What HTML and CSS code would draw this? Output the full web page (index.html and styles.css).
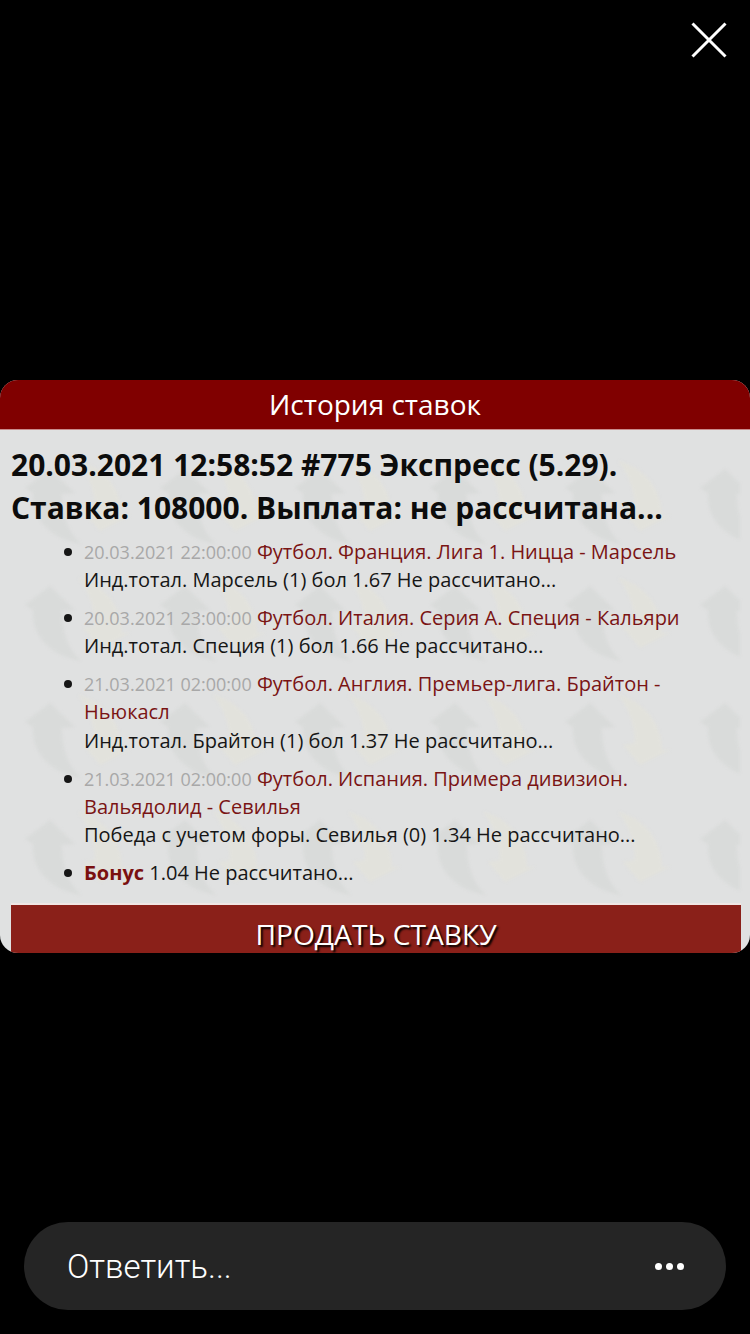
FILE: index.html
```html
<!DOCTYPE html>
<html lang="en">
<head>
    <meta charset="UTF-8">
    <meta name="viewport" content="width=device-width, initial-scale=1.0">
    <title>История ставок</title>
    <link rel="stylesheet" href="styles.css">
</head>
<body>
    <div class="top-bar">
        <svg class="close-icon" width="36" height="36" viewBox="0 0 36 36">
            <path d="M1.5 1.5L34.5 34.5M34.5 1.5L1.5 34.5" stroke="#fff" stroke-width="3" fill="none"/>
        </svg>
    </div>

    <div class="card">
        <div class="card-header">История ставок</div>
        <div class="card-body">
            <!-- Watermark behind the bet list -->
            <svg class="watermark" width="740" height="474">
                <defs>
                    <pattern id="arrows" x="25" y="31" width="135" height="117" patternUnits="userSpaceOnUse">
                        <path d="M25 8L0 27L8 32C6 56 24 78 56 83C42 70 37 52 37 33L50 32Z" fill="#d9dbda"/>
                        <path d="M53 0C78 6 96 26 97 55L105 55L75 70L58 50L70 48C70 28 62 10 53 0Z" fill="#e2e2dc"/>
                    </pattern>
                </defs>
                <rect width="100%" height="100%" fill="url(#arrows)"/>
            </svg>

            <h2 class="bet-title">20.03.2021 12:58:52 #775 Экспресс (5.29). Ставка: 108000. Выплата: не рассчитана...</h2>

            <ul class="bet-list">
                <li>
                    <span class="bet-date">20.03.2021 22:00:00</span>
                    <a class="bet-event">Футбол. Франция. Лига 1. Ницца - Марсель</a><br>
                    Инд.тотал. Марсель (1) бол 1.67 Не рассчитано...
                </li>
                <li>
                    <span class="bet-date">20.03.2021 23:00:00</span>
                    <a class="bet-event">Футбол. Италия. Серия А. Специя - Кальяри</a><br>
                    Инд.тотал. Специя (1) бол 1.66 Не рассчитано...
                </li>
                <li>
                    <span class="bet-date">21.03.2021 02:00:00</span>
                    <a class="bet-event">Футбол. Англия. Премьер-лига. Брайтон - Ньюкасл</a><br>
                    Инд.тотал. Брайтон (1) бол 1.37 Не рассчитано...
                </li>
                <li>
                    <span class="bet-date">21.03.2021 02:00:00</span>
                    <a class="bet-event">Футбол. Испания. Примера дивизион. Вальядолид - Севилья</a><br>
                    Победа с учетом форы. Севилья (0) 1.34 Не рассчитано...
                </li>
                <li>
                    <strong class="bet-bonus">Бонус</strong> 1.04 Не рассчитано...
                </li>
            </ul>

            <button class="sell-button">ПРОДАТЬ СТАВКУ</button>
        </div>
    </div>

    <div class="reply-area">
        <div class="reply-bar">
            <span class="reply-text">Ответить...</span>
            <span class="reply-dots"><i></i><i></i><i></i></span>
        </div>
    </div>
</body>
</html>
```

FILE: styles.css
```css
/* Global */
* {
    box-sizing: border-box;
}
body {
    margin: 0;
    width: 750px;
    height: 1334px;
    background-color: #000;
    display: flex;
    flex-direction: column;
    font-family: "Open Sans", sans-serif;
    overflow: hidden;
}

/* Close icon */
.top-bar {
    height: 380px;
    display: flex;
    justify-content: flex-end;
    align-items: flex-start;
    padding: 22px 23px 0 0;
}

/* Card */
.card {
    height: 573px;
    border-radius: 18px;
    overflow: hidden;
    background-color: #e0e1e1;
    display: flex;
    flex-direction: column;
}
.card-header {
    height: 50px;
    flex-shrink: 0;
    background-color: #800000;
    border-bottom: 1px solid #c98c8c;
    color: #fff;
    font-size: 28px;
    line-height: 48px;
    text-align: center;
}
.card-body {
    position: relative;
    flex: 1;
    padding: 13px 9px 0 11px;
}
.watermark {
    position: absolute;
    top: 0;
    left: 0;
    filter: blur(1.5px);
}

/* Bet details */
.bet-title {
    position: relative;
    margin: 0;
    font-size: 30px;
    line-height: 43px;
    font-weight: 700;
    color: #0c0c0c;
}
.bet-list {
    position: relative;
    margin: 8.6px 0 0;
    padding: 0 0 0 73px;
    font-size: 20px;
    line-height: 28.4px;
    color: #161616;
    list-style: none;
}
.bet-list li {
    position: relative;
    margin-bottom: 9.4px;
}
.bet-list li::before {
    content: "";
    position: absolute;
    left: -20px;
    top: 10px;
    width: 8px;
    height: 8px;
    border-radius: 50%;
    background-color: #161616;
}
.bet-date {
    color: #a8a8a8;
    font-size: 18px;
}
.bet-event {
    color: #7a1414;
}
.bet-bonus {
    color: #7a1010;
}

/* Sell button */
.sell-button {
    position: relative;
    display: block;
    width: 100%;
    height: 60px;
    margin-top: 15.4px;
    padding: 0;
    background-color: #8a2019;
    border: none;
    border-top: 2px solid #f0e6e4;
    color: #fff;
    font-family: "Open Sans", sans-serif;
    font-size: 28.2px;
    text-shadow: 2px 2px 2px #000;
}

/* Reply bar */
.reply-area {
    flex: 1;
    display: flex;
    align-items: flex-end;
    padding: 0 24px 24px;
}
.reply-bar {
    width: 100%;
    height: 88px;
    border-radius: 44px;
    background-color: #252525;
    display: flex;
    justify-content: space-between;
    align-items: center;
    padding: 0 42px 0 43px;
    color: #fff;
}
.reply-text {
    font-family: "Roboto", sans-serif;
    font-size: 33px;
    font-weight: 300;
}
.reply-dots {
    display: flex;
    gap: 4px;
}
.reply-dots i {
    width: 7px;
    height: 7px;
    border-radius: 50%;
    background-color: #fff;
}
```
